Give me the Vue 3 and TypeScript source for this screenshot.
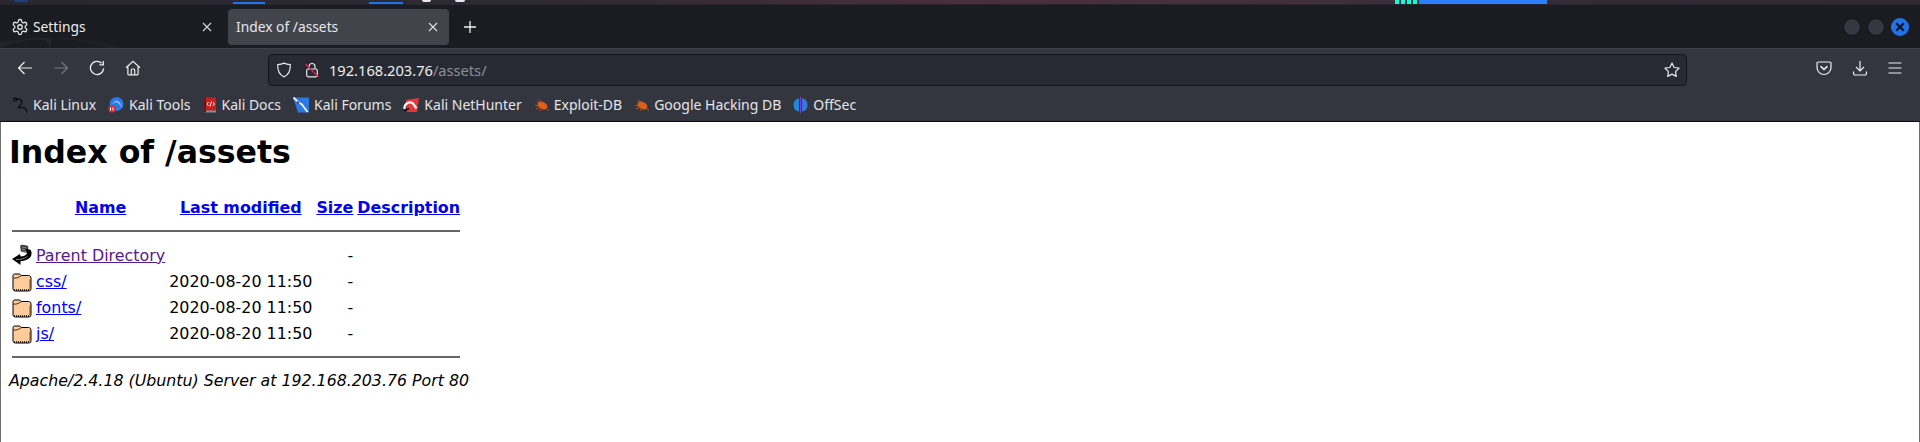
<script setup lang="ts">
const bookmarks = [
  { label: 'Kali Linux', icon: 'dragon' },
  { label: 'Kali Tools', icon: 'tools' },
  { label: 'Kali Docs', icon: 'docs' },
  { label: 'Kali Forums', icon: 'forums' },
  { label: 'Kali NetHunter', icon: 'hunter' },
  { label: 'Exploit-DB', icon: 'bug' },
  { label: 'Google Hacking DB', icon: 'bug' },
  { label: 'OffSec', icon: 'offsec' }
]
const rows = [
  { name: 'css/' },
  { name: 'fonts/' },
  { name: 'js/' }
]
</script>

<template>
  <div class="window">
    <div class="desk">
      <span class="d d-logo"></span>
      <span class="d d-w1"></span>
      <span class="d d-w2"></span>
      <span class="d d-dot1"></span>
      <span class="d d-dot2"></span>
      <span class="d-meter"><i></i><i></i><i></i><i></i></span>
      <span class="d d-task"></span>
    </div>

    <div class="tabbar">
      <svg class="wall" width="130" height="14" viewBox="0 0 130 14"><path d="M0 9 C20 5 38 3 52 4 L50 14 L46 6 C30 5 14 8 0 14Z" fill="#24252b"/><path d="M62 3 C84 5 104 9 122 14 L108 14 C92 9 76 6 62 5Z" fill="#212228"/></svg>
      <div class="tab">
        <svg class="gear" width="18" height="18" viewBox="0 0 24 24" fill="none" stroke="#e6e7ea" stroke-width="1.7"><path d="M12.22 2h-.44a2 2 0 0 0-2 2v.18a2 2 0 0 1-1 1.73l-.43.25a2 2 0 0 1-2 0l-.15-.08a2 2 0 0 0-2.73.73l-.22.38a2 2 0 0 0 .73 2.73l.15.1a2 2 0 0 1 1 1.72v.51a2 2 0 0 1-1 1.74l-.15.09a2 2 0 0 0-.73 2.73l.22.38a2 2 0 0 0 2.73.73l.15-.08a2 2 0 0 1 2 0l.43.25a2 2 0 0 1 1 1.73V20a2 2 0 0 0 2 2h.44a2 2 0 0 0 2-2v-.18a2 2 0 0 1 1-1.73l.43-.25a2 2 0 0 1 2 0l.15.08a2 2 0 0 0 2.73-.73l.22-.39a2 2 0 0 0-.73-2.73l-.15-.08a2 2 0 0 1-1-1.74v-.5a2 2 0 0 1 1-1.74l.15-.09a2 2 0 0 0 .73-2.73l-.22-.38a2 2 0 0 0-2.73-.73l-.15.08a2 2 0 0 1-2 0l-.43-.25a2 2 0 0 1-1-1.73V4a2 2 0 0 0-2-2z"/><circle cx="12" cy="12" r="3"/></svg>
        <span class="tab-label">Settings</span>
        <svg class="close" width="10" height="10" viewBox="0 0 10 10" stroke="#d8d9dc" stroke-width="1.1"><path d="M1 1l8 8M9 1l-8 8"/></svg>
      </div>
      <div class="tab active">
        <span class="tab-label">Index of /assets</span>
        <svg class="close" width="10" height="10" viewBox="0 0 10 10" stroke="#e0e1e4" stroke-width="1.1"><path d="M1 1l8 8M9 1l-8 8"/></svg>
      </div>
      <svg class="plus" width="12" height="12" viewBox="0 0 12 12" stroke="#f0f0f2" stroke-width="1.3"><path d="M6 0v12M0 6h12"/></svg>
      <div class="win-buttons">
        <span class="wb"></span>
        <span class="wb"></span>
        <span class="wb wb-close"><svg width="10" height="10" viewBox="0 0 10 10" stroke="#0c1526" stroke-width="2.2"><path d="M1.2 1.2l7.6 7.6M8.8 1.2l-7.6 7.6"/></svg></span>
      </div>
    </div>

    <div class="toolbar">
      <div class="nav">
        <svg width="16" height="16" viewBox="0 0 16 16" fill="none" stroke="#eceded" stroke-width="1.2"><path d="M15 8H1.500M7.500 2L1.500 8l6 6"/></svg>
        <svg width="16" height="16" viewBox="0 0 16 16" fill="none" stroke="#74767c" stroke-width="1.2"><path d="M1 8h13.500M8.500 2l6 6-6 6"/></svg>
        <svg width="16" height="16" viewBox="0 0 16 16" fill="none" stroke="#eceded" stroke-width="1.3"><path d="M14.600 8.400A6.600 6.600 0 1 1 12.600 3.200"/><path d="M14.300 0.900v3.900h-3.900"/></svg>
        <svg width="16" height="16" viewBox="0 0 16 16" fill="none" stroke="#eceded" stroke-width="1.2"><path d="M1 7.800L8 1.200l7 6.600M2.900 6.400V14a.8.8 0 0 0 .8.8h8.600a.8.8 0 0 0 .8-.8V6.400"/><path d="M6.300 14.600V10a1 1 0 0 1 1-1h1.400a1 1 0 0 1 1 1v4.600"/></svg>
      </div>
      <div class="urlbar">
        <svg class="shield" width="16" height="16" viewBox="0 0 16 16" fill="none" stroke="#e6e7ea" stroke-width="1.2"><path d="M8 1.100c2 1 4 1.400 6.300 1.600.2 5.600-1.700 10-6.300 12.200C3.400 12.700 1.500 8.300 1.700 2.700 4 2.500 6 2.100 8 1.100z"/></svg>
        <svg class="lock" width="16" height="16" viewBox="0 0 16 16" fill="none"><path d="M5 7V4.500a3 3 0 0 1 6 0V7" stroke="#e6e7ea" stroke-width="1.2"/><rect x="2.700" y="7" width="10.600" height="7.800" rx="1.500" stroke="#e6e7ea" stroke-width="1.2"/><path d="M1.500 2l13 13" stroke="#e22850" stroke-width="1.3"/></svg>
        <span class="url"><span class="host">192.168.203.76</span><span class="path">/assets/</span></span>
        <svg class="star" width="16" height="16" viewBox="0 0 16 16" fill="none" stroke="#e6e7ea" stroke-width="1.2" stroke-linejoin="round"><path d="M8 1.100l2.100 4.400 4.900.7-3.500 3.400.8 4.800L8 12.100l-4.300 2.300.8-4.800L1 6.200l4.900-.7z"/></svg>
      </div>
      <div class="actions">
        <svg width="16" height="16" viewBox="0 0 16 16" fill="none" stroke="#eceded" stroke-width="1.2"><path d="M2.300 2h11.400A1.300 1.300 0 0 1 15 3.300V7.500a7 7 0 0 1-14 0V3.300A1.300 1.300 0 0 1 2.300 2z"/><path d="M5 6.600l3 2.900 3-2.900" stroke-width="1.5" stroke-linecap="round"/></svg>
        <svg width="16" height="16" viewBox="0 0 16 16" fill="none" stroke="#eceded" stroke-width="1.2"><path d="M8 1v9.800M4 7l4 4 4-4"/><path d="M1.600 11.500v2.300a1.200 1.200 0 0 0 1.200 1.200h10.400a1.200 1.200 0 0 0 1.200-1.200v-2.300"/></svg>
        <svg width="16" height="16" viewBox="0 0 16 16" fill="none" stroke="#eceded" stroke-width="1.2"><path d="M1.500 3h13M1.500 8h13M1.500 13h13"/></svg>
      </div>
    </div>

    <div class="bookmarks">
      <div v-for="b in bookmarks" :key="b.label" class="bm">
        <svg v-if="b.icon === 'dragon'" width="16" height="16" viewBox="0 0 16 16" fill="none" stroke="#08080a" stroke-width="1.2"><path d="M1 1.500C4 2 7 1 9 3c2 2 0 5-2 6.500-1 1.500 1 1.500 3 1 2-.5 5 1.500 5 5"/><path d="M0.500 4L5 3.500M3 0.500l3 2"/></svg>
        <svg v-else-if="b.icon === 'tools'" width="16" height="16" viewBox="0 0 16 16"><circle cx="8.500" cy="7" r="7" fill="#2a78e4"/><path d="M5 6.500C7 4 10 4 12.500 6.500M8 3.500l6 6" stroke="#d8e8ff" stroke-width="0.8" fill="none"/><rect x="0.500" y="8.500" width="7" height="7" rx="3" fill="#e5262b"/><path d="M2.500 10.500v3M5 10.500v3" stroke="#fff" stroke-width="1"/></svg>
        <svg v-else-if="b.icon === 'docs'" width="14" height="16" viewBox="0 0 14 16"><rect x="1" y="0.500" width="12" height="13.500" fill="#c8201e"/><rect x="1" y="13.500" width="12" height="2" fill="#7a90a8"/><rect x="1" y="0.500" width="2" height="15" fill="#5c1c20"/><path d="M5.500 5L4 7l1.500 2M10 5l1.500 2L10 9M8.500 4.500L7 9.500" stroke="#fff" stroke-width="0.9" fill="none"/></svg>
        <svg v-else-if="b.icon === 'forums'" width="16" height="16" viewBox="0 0 16 16"><path d="M0 0.500h16v15H5z" fill="#2a78e4"/><path d="M0.500 0.500l5 5c1 1 2.500 1 3.500 2l5.500 7.500" stroke="#f2f4f8" stroke-width="1.8" fill="none"/><path d="M4 4.500l2 2" stroke="#20242a" stroke-width="1.2"/></svg>
        <svg v-else-if="b.icon === 'hunter'" width="16" height="16" viewBox="0 0 16 16"><path d="M3 3l13-2-2 14H4z" fill="#e5363c"/><path d="M1.500 12C1 7 6 3.500 10 6.500l3.500 5" stroke="#f4f4f4" stroke-width="2.2" fill="none"/><path d="M1 14l5-2.500" stroke="#16181c" stroke-width="1.8"/></svg>
        <svg v-else-if="b.icon === 'bug'" width="15" height="16" viewBox="0 0 15 16"><ellipse cx="8.500" cy="8.500" rx="5.200" ry="3.500" fill="#e05f18" transform="rotate(28 8.500 8.500)"/><path d="M1 8.500h4M3 4.500l4 2.500M5 2.500l2 3.500M2 12l4-2M6 14l2-3M13 12.500l2 1" stroke="#c8551a" stroke-width="0.9"/></svg>
        <svg v-else width="15" height="16" viewBox="0 0 15 16"><path d="M6 1.500C2 2 0.500 5 0.500 8s1.500 6 5.500 6.500z" fill="#2388d8"/><path d="M9 1.500c4 .5 5.500 3.500 5.500 6.500s-1.500 6-5.500 6.500z" fill="#3478dd"/><path d="M6.900 0v16h1.200V0z" fill="#7c3fd0"/></svg>
        <span class="bm-label">{{ b.label }}</span>
      </div>
    </div>

    <main class="page">
      <h1>Index of /assets</h1>
      <table>
        <tr>
          <th class="ico"></th>
          <th><a class="lnk" href="#">Name</a></th>
          <th><a class="lnk" href="#">Last modified</a></th>
          <th><a class="lnk" href="#">Size</a></th>
          <th><a class="lnk" href="#">Description</a></th>
        </tr>
        <tr><th colspan="5"><hr /></th></tr>
        <tr>
          <td class="ico">
            <svg class="fileicon" width="20" height="22" viewBox="0 0 20 22"><path d="M8.500 2l1-1 6 1 .5 1.500-.8 5-6-1z" fill="#3c3c3c" stroke="#000" stroke-width="0.5"/><path d="M9.800 3l5 .8M9.500 5l5 .8M9.300 7l5 .8" stroke="#b0b0b0" stroke-width="0.6"/><path d="M0 15L8 10l.5 2.500C12 12.500 15.500 11 15 7.500L13 5l5 .5c2.500 2.500 2 6.500-1 9-3 2-6 2.500-8.500 2.700V21z" fill="#000"/><path d="M4 15.500c4 .2 8-.5 11.500-3" stroke="#fff" stroke-width="0.5" fill="none"/></svg>
          </td>
          <td><a class="lnk visited" href="#">Parent Directory</a></td>
          <td class="right">&nbsp;</td>
          <td class="right">-</td>
          <td>&nbsp;</td>
        </tr>
        <tr v-for="r in rows" :key="r.name">
          <td class="ico">
            <svg class="fileicon" width="20" height="22" viewBox="0 0 20 22"><g transform="translate(0 1.500)"><path d="M1 6V4.200C1 3 1.700 2.500 2.500 2.500h4.800c.8 0 1.200.8 2 1.500h7.200c1.300 0 2.500 1 2.500 2.500V17c0 1.500-1 2.500-2.500 2.500h-13C1.800 19.500 1 18.500 1 17z" fill="#ffcc99" stroke="#000" stroke-width="1"/><path d="M1.500 6.500c3 .5 5-.5 8-2.500" stroke="#000" stroke-width="0.8" fill="none"/><path d="M2 18.500h16.500" stroke="#000" stroke-width="1.300" stroke-dasharray="1 1"/><path d="M18 8v10" stroke="#6b4b2a" stroke-width="1"/></g></svg>
          </td>
          <td><a class="lnk" href="#">{{ r.name }}</a></td>
          <td class="right">2020-08-20 11:50</td>
          <td class="right">-</td>
          <td>&nbsp;</td>
        </tr>
        <tr><th colspan="5"><hr /></th></tr>
      </table>
      <address>Apache/2.4.18 (Ubuntu) Server at 192.168.203.76 Port 80</address>
    </main>
  </div>
</template>

<style>
html, body { margin: 0; background: #fff; }
</style>

<style scoped>
.window { width: 1920px; height: 442px; display: flex; flex-direction: column; overflow: hidden; font-family: "Noto Sans", sans-serif; }
.desk { height: 5px; flex: none; background: linear-gradient(90deg, #2a2733 0%, #2d2935 28%, #4a2f3d 50%, #46303f 62%, #352b39 80%, #2e2935 100%); border-bottom: 1px solid #26272c; box-sizing: border-box; display: flex; align-items: flex-start; overflow: hidden; }
.d { display: block; height: 4px; flex: none; }
.d-logo { width: 14px; margin-left: 14px; background: #21407a; border-radius: 0 0 5px 5px; height: 2px; }
.d-w1 { width: 32px; margin-left: 205px; background: #2273e8; margin-top: 2px; height: 2px; }
.d-w2 { width: 34px; margin-left: 104px; background: #2273e8; margin-top: 2px; height: 2px; }
.d-dot1 { width: 9px; margin-left: 19px; background: #e8e8e8; height: 2px; border-radius: 0 0 5px 5px; }
.d-dot2 { width: 10px; margin-left: 24px; background: #e8e8e8; height: 2px; border-radius: 0 0 5px 5px; }
.d-meter { display: flex; gap: 2px; margin-left: 930px; flex: none; }
.d-meter i { display: block; width: 4px; height: 4px; background: #0dffd8; }
.d-task { width: 128px; margin-left: 2px; background: #2a7ffb; }

.tabbar { position: relative; height: 43px; flex: none; background: #1b1c21; display: flex; align-items: center; color: #eceded; font-size: 13.8px; overflow: hidden; }
.wall { position: absolute; left: 0; bottom: 0; }
.tab { position: relative; height: 36px; display: flex; align-items: center; box-sizing: border-box; width: 222px; padding: 0 10px 0 11px; border-radius: 4px; }
.tab.active { background: #42444c; width: 221px; margin-left: 6px; padding: 0 11px 0 8px; color: #e6e7ea; }
.gear { margin-right: 4px; flex: none; }
.tab-label { flex: 1; white-space: nowrap; }
.close { flex: none; }
.plus { margin-left: 15px; flex: none; position: relative; }
.win-buttons { margin-left: auto; display: flex; gap: 6px; padding-right: 11px; }
.wb { width: 18px; height: 18px; border-radius: 50%; background: #333843; border: 1px solid #101217; box-sizing: border-box; display: flex; align-items: center; justify-content: center; }
.wb-close { background: #2273e8; border-color: #2273e8; }

.toolbar { height: 37px; flex: none; background: #34363f; border-top: 1px solid #3f4148; display: flex; align-items: center; }
.nav { display: flex; align-items: center; gap: 20px; padding-left: 17px; width: 268px; box-sizing: border-box; flex: none; }
.urlbar { width: 1419px; height: 32px; box-sizing: border-box; background: #282a33; border: 1px solid #15161a; border-radius: 4px; display: flex; align-items: center; padding: 0 6px 0 7px; color: #eceded; font-size: 14.65px; margin-top: 4px; flex: none; }
.shield { margin-right: 12px; flex: none; }
.lock { margin-right: 9px; flex: none; }
.url { flex: 1; white-space: nowrap; }
.path { color: #8d8e94; }
.actions { display: flex; gap: 19.5px; align-items: center; margin-left: 129px; flex: none; }

.bookmarks { height: 36px; box-sizing: border-box; flex: none; background: #34363f; border-bottom: 1px solid #0c0c10; display: flex; align-items: center; padding: 2px 0 0 12px; gap: 12px; color: #e4e5e8; font-size: 14px; }
.bm { display: flex; align-items: center; gap: 5px; white-space: nowrap; }
.bm svg { flex: none; }

.page { flex: 1; background: #fff; border-left: 1px solid #6f6f6f; border-right: 1px solid #6f6f6f; padding: 8px; font-family: "DejaVu Sans", sans-serif; font-size: 15.9px; color: #000; }
h1 { margin: 4px 0 25px; font-size: 31.6px; }
tr:nth-child(2) th { padding-top: 2px; }
td { height: 22px; }
.lnk { color: #0000ee; text-decoration: underline; }
.lnk.visited { color: #551a8b; }
.right { text-align: right; }
.fileicon { display: block; }
hr { margin: 8px 0; border: 0; height: 2px; background: #666; }
address { font-style: italic; font-size: 15.8px; margin-top: 2px; }
</style>
